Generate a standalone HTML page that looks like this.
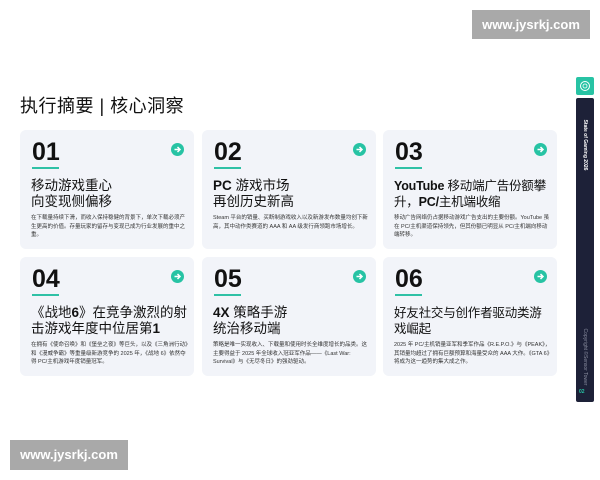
<!DOCTYPE html>
<html><head><meta charset="utf-8"><style>
*{margin:0;padding:0;box-sizing:border-box}
body{width:600px;height:480px;background:#fff;position:relative;overflow:hidden;font-family:"Liberation Sans","Noto Sans CJK SC",sans-serif;color:#111}
h1{position:absolute;left:20px;top:92px;font-size:18px;font-weight:400;letter-spacing:0.5px}
.card{position:absolute;width:174px;height:119px;background:#f2f4f9;border-radius:6px}
.num{position:absolute;left:12px;top:7px;font-size:25px;font-weight:700;line-height:30px}
.ul{position:absolute;left:12px;top:37px;width:27px;height:1.5px;background:#2fc1a6}
.arr{position:absolute;right:10px;top:13px;width:13px;height:13px;border-radius:50%;background:#27c3a4}
.arr svg{position:absolute;left:0;top:0}
.t{position:absolute;left:11px;top:48px;width:160px;font-size:13.5px;line-height:16px}
.t b{font-weight:700}
.nw{white-space:nowrap;font-size:12.5px;letter-spacing:-0.2px}
.d{position:absolute;left:11px;width:158px;font-size:5.5px;line-height:8.5px;color:#333}
.wm{position:absolute;background:#a9a9a9;color:#fff;font-size:13px;font-weight:700;text-align:center;line-height:29px}
</style></head><body>
<div class="wm" style="left:472px;top:10px;width:118px;height:29px">www.jysrkj.com</div>
<div class="wm" style="left:10px;top:440px;width:118px;height:30px">www.jysrkj.com</div>
<h1>执行摘要 | 核心洞察</h1>

<div style="position:absolute;left:576px;top:77px;width:18px;height:18px;background:#27c3a4;border-radius:2px"><svg width="18" height="18"><circle cx="9" cy="9" r="4.5" fill="none" stroke="#fff" stroke-width="1"/><circle cx="9" cy="9" r="2" fill="none" stroke="#fff" stroke-width="0.8"/></svg></div>
<div style="position:absolute;left:576px;top:98px;width:18px;height:304px;background:#1d2138;border-radius:2px">
<div style="position:absolute;left:-17px;top:44px;width:52px;transform:rotate(90deg);color:#fff;font-size:5px;font-weight:700;white-space:nowrap;text-align:center">State of Gaming 2026</div>
<div style="position:absolute;left:-24px;top:256px;width:66px;transform:rotate(90deg);color:#8a8ea0;font-size:5px;white-space:nowrap;text-align:center">Copyright ©Sensor Tower</div>
<div style="position:absolute;left:3px;top:291px;color:#27c3a4;font-size:5px;font-weight:700">02</div>
</div>

<div class="card" style="left:20px;top:130px"><div class="num">01</div><div class="ul"></div><div class="arr"><svg width="13" height="13"><path d="M3.5 6.5H9M6.5 4l2.5 2.5L6.5 9" fill="none" stroke="#fff" stroke-width="1.5"/></svg></div>
<div class="t">移动游戏重心<br>向变现侧偏移</div><div class="d" style="top:84px">在下载量持续下滑，而收入保持稳健的背景下，单次下载必须产生更高的价值。存量玩家的留存与变现已成为行业发展的重中之重。</div></div>

<div class="card" style="left:202px;top:130px"><div class="num">02</div><div class="ul"></div><div class="arr"><svg width="13" height="13"><path d="M3.5 6.5H9M6.5 4l2.5 2.5L6.5 9" fill="none" stroke="#fff" stroke-width="1.5"/></svg></div>
<div class="t"><b>PC</b> 游戏市场<br>再创历史新高</div><div class="d" style="top:84px">Steam 平台的销量、买断制游戏收入以及新游发布数量均创下新高，其中动作类赛道的 AAA 和 AA 级发行商领跑市场增长。</div></div>

<div class="card" style="left:383px;top:130px"><div class="num">03</div><div class="ul"></div><div class="arr"><svg width="13" height="13"><path d="M3.5 6.5H9M6.5 4l2.5 2.5L6.5 9" fill="none" stroke="#fff" stroke-width="1.5"/></svg></div>
<div class="t nw"><b>YouTube</b> 移动端广告份额攀<br>升，<b>PC/</b>主机端收缩</div><div class="d" style="top:84px">移动广告网络仍占据移动游戏广告支出的主要份额。YouTube 虽在 PC/主机渠道保持领先，但其份额已明显从 PC/主机端向移动端转移。</div></div>

<div class="card" style="left:20px;top:257px"><div class="num">04</div><div class="ul"></div><div class="arr"><svg width="13" height="13"><path d="M3.5 6.5H9M6.5 4l2.5 2.5L6.5 9" fill="none" stroke="#fff" stroke-width="1.5"/></svg></div>
<div class="t" style="width:160px">《战地<b>6</b>》在竞争激烈的射击游戏年度中位居第<b>1</b></div><div class="d" style="top:84px">在拥有《使命召唤》和《堡垒之夜》等巨头，以及《三角洲行动》和《漫威争霸》等重量级新游竞争的 2025 年，《战地 6》依然夺得 PC/主机游戏年度销量冠军。</div></div>

<div class="card" style="left:202px;top:257px"><div class="num">05</div><div class="ul"></div><div class="arr"><svg width="13" height="13"><path d="M3.5 6.5H9M6.5 4l2.5 2.5L6.5 9" fill="none" stroke="#fff" stroke-width="1.5"/></svg></div>
<div class="t"><b>4X</b> 策略手游<br>统治移动端</div><div class="d" style="top:84px">策略是唯一实现收入、下载量和使用时长全维度增长的品类。这主要得益于 2025 年全球收入冠亚军作品——《Last War: Survival》与《无尽冬日》的强劲驱动。</div></div>

<div class="card" style="left:383px;top:257px"><div class="num">06</div><div class="ul"></div><div class="arr"><svg width="13" height="13"><path d="M3.5 6.5H9M6.5 4l2.5 2.5L6.5 9" fill="none" stroke="#fff" stroke-width="1.5"/></svg></div>
<div class="t nw">好友社交与创作者驱动类游<br>戏崛起</div><div class="d" style="top:84px">2025 年 PC/主机销量亚军和季军作品《R.E.P.O.》与《PEAK》，其销量均超过了拥有巨额预算和海量受众的 AAA 大作。《GTA 6》将成为这一趋势的集大成之作。</div></div>
</body></html>
